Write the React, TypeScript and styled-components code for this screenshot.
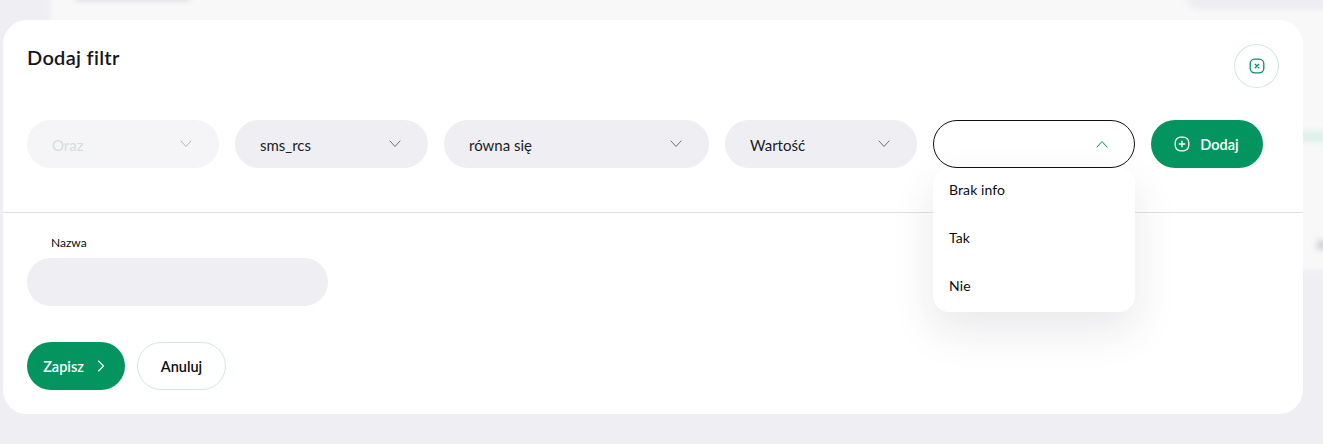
import { createGlobalStyle, styled } from 'styled-components';

const GREEN = '#03945f';

const GlobalStyle = createGlobalStyle`
  html, body {
    margin: 0;
    padding: 0;
    height: 444px;
    overflow: hidden;
    background: #eeeef3;
    font-family: "Lato", "Noto Sans", sans-serif;
    color: #1c1c24;
  }
  * { box-sizing: border-box; }
`;

const Chevron = ({ up, color = '#6f7078' }: { up?: boolean; color?: string }) => (
  <svg width="12" height="8" viewBox="0 0 12 8" fill="none">
    <path
      d={up ? 'M1 7l5-5.5L11 7' : 'M1 1l5 5.5L11 1'}
      stroke={color}
      strokeWidth="1"
      strokeLinecap="round"
      strokeLinejoin="round"
    />
  </svg>
);

const SquircleIcon = ({ color, mark }: { color: string; mark: 'x' | 'plus' }) => (
  <svg width="16" height="16" viewBox="0 0 16 16" fill="none">
    <rect x="1.2" y="1.2" width="13.6" height="13.6" rx={mark === 'x' ? 4.5 : 5.5} stroke={color} strokeWidth="1.3" />
    <path
      d={mark === 'x' ? 'M6.2 6.2l3.6 3.6M9.8 6.2l-3.6 3.6' : 'M8 5.2v5.6M5.2 8h5.6'}
      stroke={color}
      strokeWidth="1.3"
      strokeLinecap="round"
    />
  </svg>
);

const Select = ({
  label,
  width,
  disabled,
}: {
  label: string;
  width: number;
  disabled?: boolean;
}) => (
  <SelectBox $width={width} $disabled={disabled}>
    <SelectLabel>{label}</SelectLabel>
    <Chevron color={disabled ? '#b4b5bb' : '#6f7078'} />
  </SelectBox>
);

export default function App() {
  return (
    <>
      <GlobalStyle />
      <Page>
        <Backdrop>
          <BackdropPanel />
          <BackdropCorner />
          <BackdropHeading />
          <BackdropBadge />
          <BackdropDot />
        </Backdrop>
        <Modal>
          <Header>
            <Title>Dodaj filtr</Title>
            <CloseButton aria-label="Zamknij">
              <SquircleIcon color={GREEN} mark="x" />
            </CloseButton>
          </Header>

          <FilterRow>
            <Select label="Oraz" width={192} disabled />
            <Select label="sms_rcs" width={193} />
            <Select label="równa się" width={265} />
            <Select label="Wartość" width={192} />
            <OpenSelect>
              <OpenTrigger>
                <Chevron up color={GREEN} />
              </OpenTrigger>
              <Menu>
                <MenuItem>Brak info</MenuItem>
                <MenuItem>Tak</MenuItem>
                <MenuItem>Nie</MenuItem>
              </Menu>
            </OpenSelect>
            <PrimaryButton $width={112} $gap={10} $shift={1}>
              <SquircleIcon color="#ffffff" mark="plus" />
              Dodaj
            </PrimaryButton>
          </FilterRow>

          <Divider />

          <NameField>
            <FieldLabel>Nazwa</FieldLabel>
            <NameInput />
          </NameField>

          <Actions>
            <PrimaryButton $width={98} $gap={13} $shift={4}>
              Zapisz
              <svg width="8" height="12" viewBox="0 0 8 12" fill="none">
                <path d="M1.5 1l5 5-5 5" stroke="#fff" strokeWidth="1.1" strokeLinecap="round" strokeLinejoin="round" />
              </svg>
            </PrimaryButton>
            <GhostButton>Anuluj</GhostButton>
          </Actions>
        </Modal>
      </Page>
    </>
  );
}

const Page = styled.div`
  position: relative;
  width: 1323px;
  height: 444px;
  padding: 20px 20px 30px 3px;
  overflow: hidden;
`;

/* the page behind the modal, seen out of focus */
const Backdrop = styled.div`
  position: absolute;
  inset: 0;
  filter: blur(3px);
`;

const BackdropPanel = styled.div`
  position: absolute;
  left: 50px;
  top: -20px;
  width: 1300px;
  height: 290px;
  background: #f8f8f9;
`;

const BackdropCorner = styled.div`
  position: absolute;
  left: 1185px;
  top: -30px;
  width: 170px;
  height: 40px;
  border-radius: 16px;
  background: #eeeef2;
`;

const BackdropHeading = styled.div`
  position: absolute;
  left: 75px;
  top: -6px;
  width: 115px;
  height: 6px;
  background: #d4d4d8;
`;

const BackdropBadge = styled.div`
  position: absolute;
  left: 1300px;
  top: 131px;
  width: 30px;
  height: 11px;
  background: #deefe9;
`;

const BackdropDot = styled.div`
  position: absolute;
  left: 1317px;
  top: 241px;
  width: 10px;
  height: 8px;
  background: #c8c8cc;
`;

const Modal = styled.div`
  position: relative;
  width: 1300px;
  height: 394px;
  background: #ffffff;
  border-radius: 24px;
`;

const Header = styled.div`
  display: flex;
  justify-content: space-between;
  align-items: flex-start;
  height: 100px;
  padding: 24px 24px 0;
`;

const Title = styled.h2`
  margin: 1px 0 0;
  font-size: 20px;
  line-height: 24px;
  font-weight: 600;
  letter-spacing: 0.3px;
  color: #16161d;
`;

const CloseButton = styled.button`
  display: flex;
  align-items: center;
  justify-content: center;
  width: 45px;
  height: 44px;
  padding: 0;
  background: #fff;
  border: 1px solid #cfe9e0;
  border-radius: 50%;
`;

const FilterRow = styled.div`
  display: flex;
  gap: 16px;
  padding: 0 24px;
  height: 92px;
`;

const SelectBox = styled.div<{ $width: number; $disabled?: boolean }>`
  display: flex;
  align-items: center;
  justify-content: space-between;
  width: ${(p) => p.$width}px;
  height: 48px;
  padding: 0 27px 0 25px;
  border-radius: 24px;
  font-size: 15px;
  background: ${(p) => (p.$disabled ? '#f5f5f8' : '#eeeef3')};
  color: ${(p) => (p.$disabled ? '#cfe0da' : '#1c1c24')};
`;

const SelectLabel = styled.span`
  padding-top: 2px;
`;

const OpenSelect = styled.div`
  position: relative;
  width: 202px;
  height: 48px;
`;

const OpenTrigger = styled.div`
  display: flex;
  align-items: center;
  justify-content: flex-end;
  height: 48px;
  padding-right: 26px;
  border: 1px solid #111;
  border-radius: 24px;
  background: #fff;
`;

const Menu = styled.div`
  position: absolute;
  z-index: 2;
  top: 48px;
  left: 0;
  width: 202px;
  background: #fff;
  border-radius: 16px;
  box-shadow: 0 18px 44px rgba(30, 30, 50, 0.1);
`;

const MenuItem = styled.div`
  display: flex;
  align-items: center;
  height: 48px;
  padding: 0 0 6px 16px;
  font-size: 14px;
  letter-spacing: 0.1px;
  color: #0c0c12;
`;

const PrimaryButton = styled.button<{ $width: number; $gap: number; $shift: number }>`
  display: flex;
  align-items: center;
  justify-content: center;
  gap: ${(p) => p.$gap}px;
  width: ${(p) => p.$width}px;
  height: 48px;
  padding: 0 ${(p) => p.$shift}px 0 0;
  border: 0;
  border-radius: 24px;
  background: ${GREEN};
  color: #fff;
  font: 600 14.5px "Lato", "Noto Sans", sans-serif;
`;

const GhostButton = styled.button`
  width: 89px;
  height: 48px;
  padding: 0;
  background: #fff;
  border: 1px solid #cfe9e0;
  border-radius: 24px;
  color: #0c0c12;
  font: 600 14.5px "Lato", "Noto Sans", sans-serif;
`;

const Divider = styled.div`
  height: 1px;
  background: #e0e0e4;
`;

const NameField = styled.div`
  display: flex;
  flex-direction: column;
  width: 301px;
  margin: 23px 0 0 24px;
`;

const FieldLabel = styled.label`
  height: 22px;
  padding-left: 24px;
  font-size: 12px;
  line-height: 14px;
  color: #0c0c12;
`;

const NameInput = styled.div`
  height: 48px;
  border-radius: 24px;
  background: #eeeef3;
`;

const Actions = styled.div`
  display: flex;
  gap: 12px;
  margin: 36px 0 0 24px;
`;
